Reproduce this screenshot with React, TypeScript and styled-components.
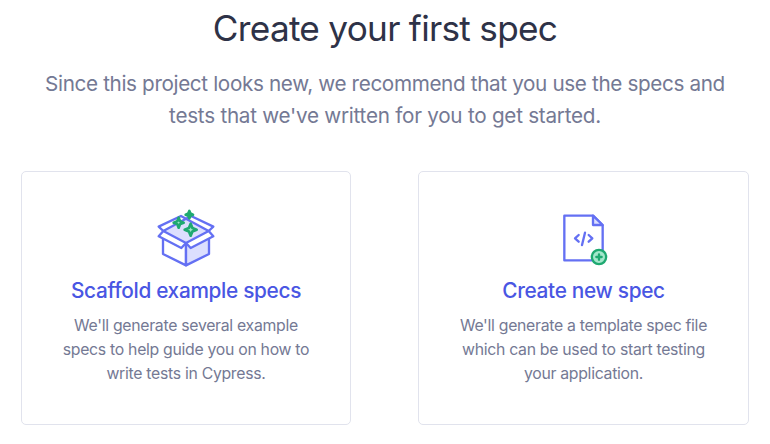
import React from "react";
import styled, { createGlobalStyle } from "styled-components";

const GlobalStyle = createGlobalStyle`
  * { box-sizing: border-box; }
  body { margin: 0; background: #fff; font-family: Inter, "Liberation Sans", sans-serif; }
`;

const Page = styled.main`
  width: 770px;
  height: 444px;
  padding: 4px 21px 0;
  overflow: hidden;
  text-align: center;
`;

const Title = styled.h1`
  margin: 0;
  font-size: 35.2px;
  font-weight: 400;
  line-height: 49px;
  letter-spacing: -0.72px;
  color: #2e3247;
`;

const Lead = styled.p`
  margin: 15px 0 0;
  font-size: 20.7px;
  line-height: 32px;
  letter-spacing: -0.36px;
  color: #747994;
  white-space: nowrap;
`;

const LeadEnd = styled.span`
  letter-spacing: -0.26px;
`;

const Cards = styled.div`
  display: grid;
  grid-template-columns: 330px 331px;
  justify-content: space-between;
  margin-top: 39px;
`;

const Card = styled.button`
  display: flex;
  flex-direction: column;
  align-items: center;
  height: 254px;
  padding: 32px 0 0;
  border: 1px solid #e1e3ed;
  border-radius: 5px;
  background: #fff;
  font-family: inherit;
`;

const Icon = styled.svg`
  display: block;
  flex: none;
  width: 72px;
  height: 68px;
`;

const CardTitle = styled.h2`
  margin: 3px 0 0;
  font-size: 20.8px;
  font-weight: 500;
  line-height: 32px;
  letter-spacing: -0.31px;
  color: #4956e3;
`;

const CardText = styled.p`
  margin: 7px 0 0;
  font-size: 15.8px;
  line-height: 23.8px;
  letter-spacing: -0.29px;
  color: #747994;
  white-space: nowrap;
`;

const Sparkle = ({ x, y, r, hollow }: { x: number; y: number; r: number; hollow: boolean }) => {
  const k = r * 0.29;
  return (
    <path
      d={`M0 ${-r}L${k} ${-k}L${r} 0L${k} ${k}L0 ${r}L${-k} ${k}L${-r} 0L${-k} ${-k}Z`}
      transform={`translate(${x} ${y})`}
      fill={hollow ? "#a3e7cb" : "#1fa971"}
      stroke="#1fa971"
      strokeWidth="8"
      strokeLinejoin="round"
    />
  );
};

const BoxIcon = () => (
  <Icon viewBox="0 0 216 204" fill="none" stroke="#6470f3" strokeWidth="7" strokeLinejoin="round" strokeLinecap="round">
    <path d="M39 104V150L108 184V116Z" fill="#fff" />
    <path d="M177 104V150L108 184V116Z" fill="#dcdffe" />
    <path d="M108 44L176 81L108 117L40 81Z" fill="#dcdffe" stroke="none" />
    <path d="M26 68L93 36L108 44L40 81Z" fill="#fff" />
    <path d="M190 68L123 36L108 44L176 81Z" fill="#fff" />
    <path d="M40 81L26 97L94 132L108 117Z" fill="#fff" />
    <path d="M176 81L190 97L122 132L108 117Z" fill="#fff" />
    <Sparkle x={118} y={32} r={11} hollow={false} />
    <Sparkle x={86} y={56} r={15} hollow />
    <Sparkle x={122} y={77} r={18} hollow />
  </Icon>
);

const FileIcon = () => (
  <Icon viewBox="-6 -6 216 204" fill="none" stroke="#6470f3" strokeWidth="7" strokeLinejoin="round" strokeLinecap="round">
    <path d="M43 29H129L158 58V163H43Z" fill="#fff" />
    <path d="M129 29V57H158Z" fill="#dcdffe" />
    <path d="M86 87L75 97L86 107M116 87L127 97L116 107M105 80L96 117" />
    <circle cx="147" cy="153" r="21.5" fill="#a3e7cb" stroke="#1fa971" />
    <path d="M147 145V161M139 153H155" stroke="#1fa971" />
  </Icon>
);

export default function App() {
  return (
    <>
      <GlobalStyle />
      <Page>
        <Title>Create your first spec</Title>
        <Lead>
          Since this project looks new, we recommend that you use the specs and
          <br />
          <LeadEnd>tests that we've written for you to get started.</LeadEnd>
        </Lead>
        <Cards>
          <Card>
            <BoxIcon />
            <CardTitle>Scaffold example specs</CardTitle>
            <CardText>
              We'll generate several example
              <br />
              specs to help guide you on how to
              <br />
              write tests in Cypress.
            </CardText>
          </Card>
          <Card>
            <FileIcon />
            <CardTitle>Create new spec</CardTitle>
            <CardText>
              We'll generate a template spec file
              <br />
              which can be used to start testing
              <br />
              your application.
            </CardText>
          </Card>
        </Cards>
      </Page>
    </>
  );
}
